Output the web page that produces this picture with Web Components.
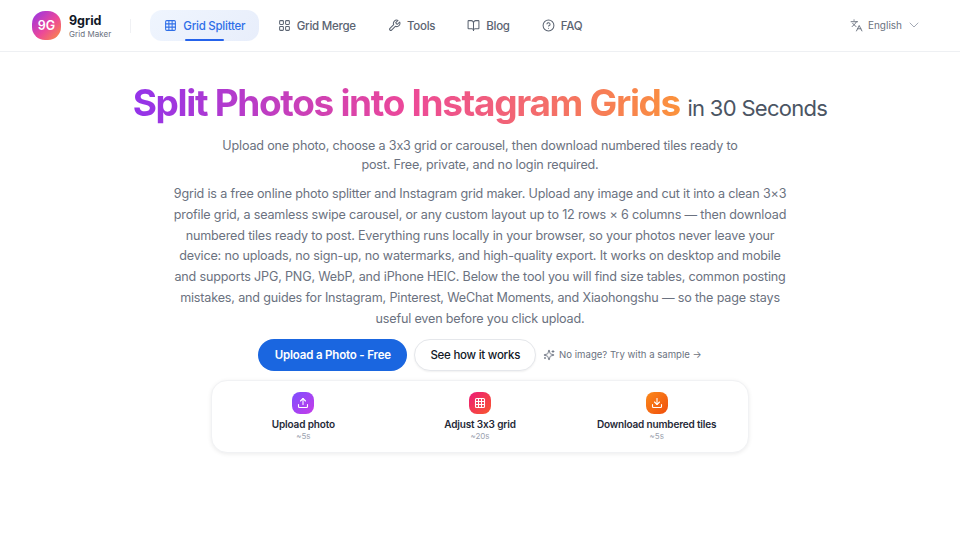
<!DOCTYPE html>
<html lang="en">
<head>
<meta charset="utf-8">
<title>9grid</title>
<style>
  html, body { margin: 0; background: #fff; }
  body { font-family: Inter, "Liberation Sans", sans-serif; font-feature-settings: "calt" 0; color: #111827; }
</style>
</head>
<body>
<site-page>
  <site-header slot="header"></site-header>
  <hero-section></hero-section>
</site-page>

<script>
const icons = {
  grid: '<rect x="3" y="3" width="18" height="18" rx="2"/><path d="M3 9h18M3 15h18M9 3v18M15 3v18"/>',
  merge: '<rect x="3" y="3" width="7" height="7" rx="1.5"/><rect x="14" y="3" width="7" height="7" rx="1.5"/><rect x="3" y="14" width="7" height="7" rx="1.5"/><rect x="14" y="14" width="7" height="7" rx="1.5"/>',
  wrench: '<path d="M14.7 6.3a1 1 0 0 0 0 1.4l1.6 1.6a1 1 0 0 0 1.4 0l3.77-3.77a6 6 0 0 1-7.94 7.94l-6.91 6.91a2.12 2.12 0 0 1-3-3l6.91-6.91a6 6 0 0 1 7.94-7.94l-3.76 3.76z"/>',
  book: '<path d="M12 7v14"/><path d="M3 18a1 1 0 0 1-1-1V4a1 1 0 0 1 1-1h5a4 4 0 0 1 4 4 4 4 0 0 1 4-4h5a1 1 0 0 1 1 1v13a1 1 0 0 1-1 1h-6a3 3 0 0 0-3 3 3 3 0 0 0-3-3z"/>',
  help: '<circle cx="12" cy="12" r="10"/><path d="M9.09 9a3 3 0 0 1 5.83 1c0 2-3 3-3 3"/><path d="M12 17h.01"/>',
  lang: '<path d="m5 8 6 6"/><path d="m4 14 6-6 2-3"/><path d="M2 5h12"/><path d="M7 2h1"/><path d="m22 22-5-10-5 10"/><path d="M14 18h6"/>',
  chevron: '<path d="m6 9 6 6 6-6"/>',
  sparkles: '<path d="M9.94 15.5A2 2 0 0 0 8.5 14.06l-6.14-1.58a.5.5 0 0 1 0-.96L8.5 9.94A2 2 0 0 0 9.94 8.5l1.58-6.14a.5.5 0 0 1 .96 0L14.06 8.5A2 2 0 0 0 15.5 9.94l6.14 1.58a.5.5 0 0 1 0 .96L15.5 14.06a2 2 0 0 0-1.44 1.44l-1.58 6.14a.5.5 0 0 1-.96 0z"/><path d="M20 3v4M22 5h-4M4 17v2M5 18H3"/>',
  upload: '<path d="M21 15v4a2 2 0 0 1-2 2H5a2 2 0 0 1-2-2v-4"/><path d="m17 8-5-5-5 5"/><path d="M12 3v12"/>',
  download: '<path d="M21 15v4a2 2 0 0 1-2 2H5a2 2 0 0 1-2-2v-4"/><path d="m7 10 5 5 5-5"/><path d="M12 15V3"/>'
};

function svg(name, size, width) {
  return `<svg width="${size}" height="${size}" viewBox="0 0 24 24" fill="none" stroke="currentColor" stroke-width="${width || 2}" stroke-linecap="round" stroke-linejoin="round">${icons[name]}</svg>`;
}

class SitePage extends HTMLElement {
  constructor() {
    super();
    this.attachShadow({ mode: 'open' }).innerHTML = `
      <style>
        :host { display: flex; flex-direction: column; min-height: 540px; }
      </style>
      <slot name="header"></slot>
      <slot></slot>
    `;
  }
}

class NavItem extends HTMLElement {
  constructor() {
    super();
    const icon = this.getAttribute('icon');
    this.attachShadow({ mode: 'open' }).innerHTML = `
      <style>
        :host { display: block; position: relative; }
        a {
          display: flex; align-items: center; gap: 6px;
          height: 31px; padding: 0 13.5px; border-radius: 12px;
          font-size: 11.5px; letter-spacing: -.25px; font-weight: 500; color: #5b6472; white-space: nowrap;
        }
        svg { display: block; flex: none; }
        :host([active]) a {
          padding: 0 14px;
          color: #2f6fe8;
          background: linear-gradient(135deg, #eff5fe, #e8eefb);
        }
        .bar { display: none; }
        :host([active]) .bar {
          display: block; position: absolute; left: 35px; right: 35px; bottom: 0;
          height: 2px; border-radius: 2px; background: #2563eb;
        }
      </style>
      <a>${svg(icon, 13, 1.9)}<slot></slot></a>
      <span class="bar"></span>
    `;
  }
}

class SiteHeader extends HTMLElement {
  constructor() {
    super();
    this.attachShadow({ mode: 'open' }).innerHTML = `
      <style>
        :host {
          display: flex; align-items: center; height: 51px; padding: 0 32px;
          border-bottom: 1px solid #eef0f3; background: #fff;
        }
        .logo {
          width: 29px; height: 29px; border-radius: 13px; flex: none;
          display: flex; align-items: center; justify-content: center;
          background: linear-gradient(135deg, #9333ea, #ec4899 55%, #fb923c);
          color: #fff; font-size: 12.5px; font-weight: 600;
        }
        .brand { margin: 2px 0 0 8px; display: flex; flex-direction: column; }
        .name { font-size: 12.5px; line-height: 16px; font-weight: 700; color: #111827; }
        .tag { font-size: 8px; line-height: 11px; color: #6b7280; letter-spacing: .05px; }
        .rule { width: 1px; height: 14px; background: #f0f1f4; margin: 0 19px; }
        nav { display: flex; align-items: center; gap: 5px; }
        .lang {
          margin-left: auto; display: flex; align-items: center; gap: 5px;
          font-size: 10px; color: #6b7280; padding: 0 6px 1px 0;
        }
        .lang svg { display: block; }
        .lang .chev { margin-left: -1px; color: #9ca3af; }
      </style>
      <div class="logo">9G</div>
      <div class="brand"><span class="name">9grid</span><span class="tag">Grid Maker</span></div>
      <span class="rule"></span>
      <nav>
        <nav-item icon="grid" active>Grid Splitter</nav-item>
        <nav-item icon="merge">Grid Merge</nav-item>
        <nav-item icon="wrench">Tools</nav-item>
        <nav-item icon="book">Blog</nav-item>
        <nav-item icon="help">FAQ</nav-item>
      </nav>
      <div class="lang">${svg('lang', 13, 1.8)}<span>English</span><span class="chev">${svg('chevron', 16, 1.4)}</span></div>
    `;
  }
}

class StepItem extends HTMLElement {
  constructor() {
    super();
    const gradient = this.getAttribute('gradient');
    const icon = this.getAttribute('icon');
    const time = this.getAttribute('time');
    this.attachShadow({ mode: 'open' }).innerHTML = `
      <style>
        :host { display: flex; flex-direction: column; align-items: center; }
        .badge {
          width: 22px; height: 22px; border-radius: 8px; color: #fff;
          display: flex; align-items: center; justify-content: center;
          background: ${gradient};
        }
        svg { display: block; }
        .label { margin-top: 2px; font-size: 10px; line-height: 16px; letter-spacing: -.15px; font-weight: 600; color: #1f2937; }
        .time { font-size: 8px; line-height: 9px; color: #9ca3af; }
      </style>
      <div class="badge">${svg(icon, 12, 2.2)}</div>
      <div class="label"><slot></slot></div>
      <div class="time">${time}</div>
    `;
  }
}

class HeroSection extends HTMLElement {
  constructor() {
    super();
    this.attachShadow({ mode: 'open' }).innerHTML = `
      <style>
        :host { display: flex; flex-direction: column; align-items: center; padding-top: 26px; text-align: center; }
        h1 { margin: 0; font-size: 37px; line-height: 50px; font-weight: 700; letter-spacing: -1.33px; white-space: nowrap; }
        h1 .grad {
          background: linear-gradient(90deg, #9333ea, #ec4899 50%, #fb923c);
          -webkit-background-clip: text; background-clip: text; color: transparent;
        }
        h1 small { font-size: 22px; font-weight: 400; color: #4b5563; letter-spacing: -.7px; }
        .sub { margin: 3px 0 0; width: 530px; font-size: 12.6px; line-height: 19px; letter-spacing: -.18px; color: #6b7280; }
        .desc { margin: 10px 0 0; width: 625px; font-size: 12.6px; line-height: 20.8px; letter-spacing: -.175px; color: #6b7280; }
        .actions { margin-top: 9px; display: flex; align-items: center; }
        .primary {
          height: 32px; padding: 0 16.5px; border-radius: 16px; display: flex; align-items: center;
          background: #1a66e0; color: #fff; font-size: 11.5px; letter-spacing: -.18px; font-weight: 600;
        }
        .secondary {
          height: 30px; margin-left: 7px; padding: 0 15px; border-radius: 16px; display: flex; align-items: center;
          border: 1px solid #e5e7eb; box-shadow: 0 1px 2px rgba(0,0,0,.06);
          background: #fff; color: #111827; font-size: 11.5px; letter-spacing: -.25px; font-weight: 500;
        }
        .sample { margin-left: 7px; display: flex; align-items: center; gap: 4px; font-size: 9.6px; color: #6b7280; }
        .sample svg { display: block; }
        .steps {
          margin-top: 9px; width: 530px; height: 60px; padding: 11px 3px 0;
          display: grid; grid-template-columns: repeat(3, 1fr); align-items: start;
          border: 1px solid #f1f2f4; border-radius: 16px; background: #fff;
          box-shadow: 0 1px 4px rgba(0,0,0,.08);
        }
      </style>
      <h1><span class="grad">Split Photos into Instagram Grids</span> <small>in 30 Seconds</small></h1>
      <p class="sub">Upload one photo, choose a 3x3 grid or carousel, then download numbered tiles ready to post. Free, private, and no login required.</p>
      <p class="desc">9grid is a free online photo splitter and Instagram grid maker. Upload any image and cut it into a clean 3×3 profile grid, a seamless swipe carousel, or any custom layout up to 12 rows × 6 columns — then download numbered tiles ready to post. Everything runs locally in your browser, so your photos never leave your device: no uploads, no sign-up, no watermarks, and high-quality export. It works on desktop and mobile and supports JPG, PNG, WebP, and iPhone HEIC. Below the tool you will find size tables, common posting mistakes, and guides for Instagram, Pinterest, WeChat Moments, and Xiaohongshu — so the page stays useful even before you click upload.</p>
      <div class="actions">
        <a class="primary">Upload a Photo - Free</a>
        <a class="secondary">See how it works</a>
        <a class="sample">${svg('sparkles', 12, 1.8)}<span>No image? Try with a sample →</span></a>
      </div>
      <div class="steps">
        <step-item icon="upload" time="~5s" gradient="linear-gradient(135deg, #7c4dff, #c73ce8)">Upload photo</step-item>
        <step-item icon="grid" time="~20s" gradient="linear-gradient(135deg, #ec1a78, #f9582d)">Adjust 3x3 grid</step-item>
        <step-item icon="download" time="~5s" gradient="linear-gradient(135deg, #fb8a1c, #f04e0c)">Download numbered tiles</step-item>
      </div>
    `;
  }
}

customElements.define('site-page', SitePage);
customElements.define('nav-item', NavItem);
customElements.define('site-header', SiteHeader);
customElements.define('step-item', StepItem);
customElements.define('hero-section', HeroSection);
</script>
</body>
</html>
